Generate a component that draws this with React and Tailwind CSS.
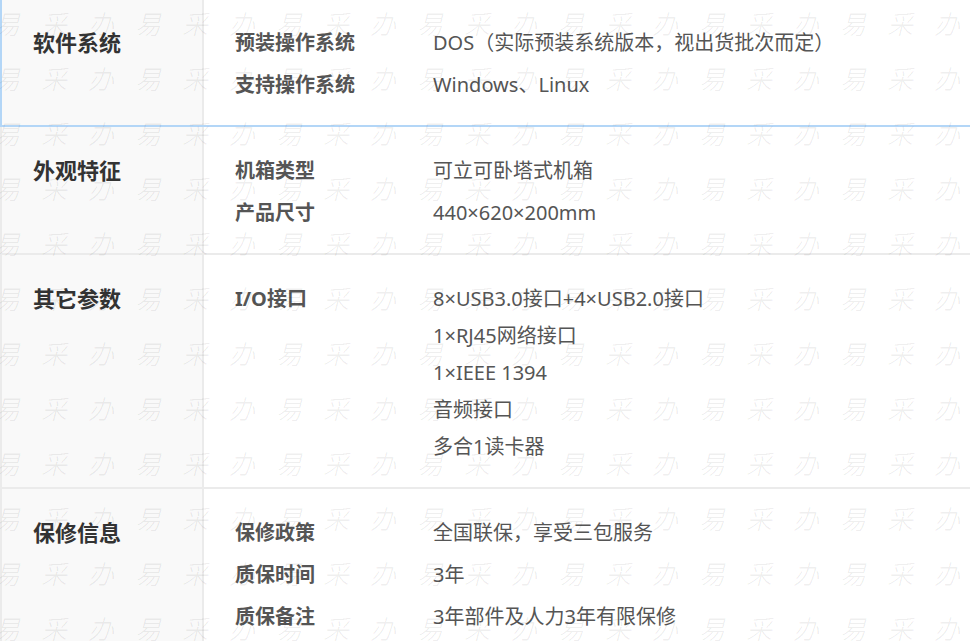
import React from 'react';

const sections = [
  {
    title: '软件系统',
    active: true,
    rows: [
      ['预装操作系统', ['DOS（实际预装系统版本，视出货批次而定）']],
      ['支持操作系统', ['Windows、Linux']],
    ],
  },
  {
    title: '外观特征',
    rows: [
      ['机箱类型', ['可立可卧塔式机箱']],
      ['产品尺寸', ['440×620×200mm']],
    ],
  },
  {
    title: '其它参数',
    rows: [
      ['I/O接口', ['8×USB3.0接口+4×USB2.0接口', '1×RJ45网络接口', '1×IEEE 1394', '音频接口', '多合1读卡器']],
    ],
  },
  {
    title: '保修信息',
    rows: [
      ['保修政策', ['全国联保，享受三包服务']],
      ['质保时间', ['3年']],
      ['质保备注', ['3年部件及人力3年有限保修']],
    ],
  },
];

const MARK = ['易', '采', '办'];

// faint repeated watermark laid over the table
const Watermark = () => (
  <div aria-hidden="true" className="pointer-events-none absolute inset-0 overflow-hidden select-none">
    <div className="absolute -left-[6px] top-[11px] flex flex-col gap-[29px]">
      {Array.from({ length: 12 }).map((_, r) => (
        <div key={r} className="flex gap-[21px]">
          {Array.from({ length: 21 }).map((_, c) => (
            <span
              key={c}
              className="w-[26px] text-[26px] leading-[26px] italic font-light text-black/[0.08]"
            >
              {MARK[c % 3]}
            </span>
          ))}
        </div>
      ))}
    </div>
  </div>
);

const Section = ({ title, rows, active }) => (
  <div
    className={
      active
        ? 'flex border-l-2 border-b-2 border-[#b3d6f7]'
        : 'flex border-l-2 border-b-2 border-[#ebebeb]'
    }
  >
    <div className="w-[202px] shrink-0 bg-[#f9f9f9] border-r-2 border-[#ebebeb] pl-[31px] pt-[22px]">
      <div className="text-[22px] leading-[42px] font-bold text-[#333]">{title}</div>
    </div>
    <div className="flex-1 pt-[22px] pb-[20px] pl-[31px]">
      {rows.map(([label, values]) => (
        <div key={label} className="flex py-[2.5px]">
          <div className="w-[198px] shrink-0 text-[20px] leading-[37px] font-bold text-[#555]">
            {label}
          </div>
          <div className="text-[20px] leading-[37px] text-[#555]">
            {values.map((v) => (
              <div key={v}>{v}</div>
            ))}
          </div>
        </div>
      ))}
    </div>
  </div>
);

export default function App() {
  return (
    <div className="relative w-[970px] h-[641px] overflow-hidden bg-white font-['Noto_Sans','Noto_Sans_CJK_SC',sans-serif]">
      <div className="w-[990px] -mt-[1px]">
        {sections.map((s) => (
          <Section key={s.title} {...s} />
        ))}
      </div>
      <Watermark />
    </div>
  );
}
